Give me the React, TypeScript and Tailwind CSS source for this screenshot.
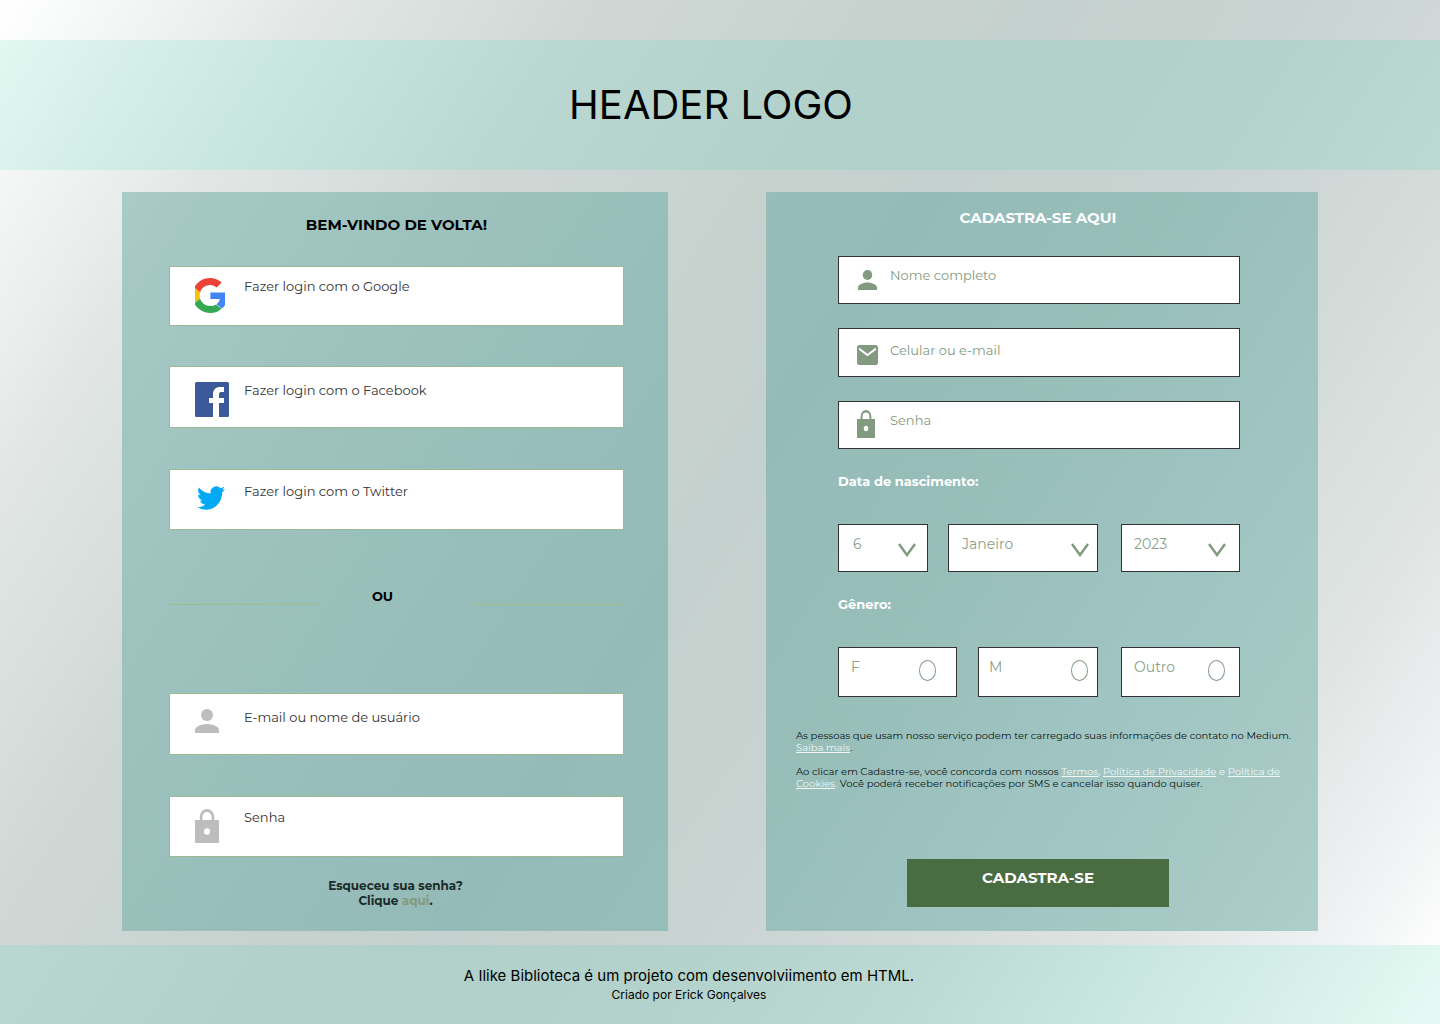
import React from "react";

const page = "bg-[linear-gradient(123deg,#ffffff_0%,#f6f8f8_5%,#e2e7e6_15%,#d0d8d6_28%,#c7d2cf_42%,#c5d1ce_50%,#c9d3d1_62%,#d4dcda_74%,#e0e5e4_84%,#f1f3f4_93%,#ffffff_98%)]";
const band = "bg-fixed bg-[linear-gradient(123deg,#e4f9f3_0%,#daf3ec_5%,#c9e6df_15%,#bad8d1_28%,#b2d1ca_42%,#b0d0c9_50%,#b3d2cb_62%,#bcdad3_74%,#c9e6df_84%,#d8f1ea_93%,#e4f9f3_99%)]";
const panel = "bg-fixed bg-[linear-gradient(123deg,#b9dad6_0%,#abcec8_10%,#a5c8c4_15%,#9dc2be_28%,#96bdb9_42%,#94bbb7_50%,#98beba_62%,#9fc4c1_74%,#a6c9c5_84%,#afd0cc_93%,#b2d3cf_98%)]";

function Person({ className }: { className: string }) {
  return (
    <svg className={className} viewBox="4 4 16 16" preserveAspectRatio="none" fill="currentColor" aria-hidden="true">
      <circle cx="12" cy="8" r="4" />
      <path d="M12 14c-2.67 0-8 1.34-8 4v2h16v-2c0-2.66-5.33-4-8-4z" />
    </svg>
  );
}

function Lock({ className }: { className: string }) {
  return (
    <svg className={className} viewBox="0 0 24 34" preserveAspectRatio="none" fill="currentColor" aria-hidden="true">
      <path fillRule="evenodd" d="M0 11h4.800V8a7.200 8 0 0 1 14.400 0v3H24v23H0zM7.400 11h9.200V8a4.600 5 0 0 0-9.200 0zM12 19.200a3 3.300 0 1 0 0 6.600a3 3.300 0 1 0 0-6.600z" />
    </svg>
  );
}

function Mail({ className }: { className: string }) {
  return (
    <svg className={className} viewBox="2 4 20 16" preserveAspectRatio="none" fill="currentColor" aria-hidden="true">
      <path d="M20 4H4c-1.100 0-2 .9-2 2v12c0 1.100.9 2 2 2h16c1.100 0 2-.9 2-2V6c0-1.100-.9-2-2-2zm0 4l-8 5-8-5V6l8 5 8-5v2z" />
    </svg>
  );
}

function Google() {
  return (
    <svg className="h-[35px] w-[30px]" viewBox="3.5 0 41 48" preserveAspectRatio="none" aria-hidden="true">
      <path fill="#EA4335" d="M24 9.500c3.540 0 6.710 1.220 9.210 3.600l6.850-6.850C35.900 2.380 30.470 0 24 0 14.620 0 6.510 5.380 2.560 13.220l7.980 6.190C12.430 13.720 17.740 9.500 24 9.500z" />
      <path fill="#4285F4" d="M48 20H24.500v8.800h12.940c-.58 2.960-2.260 5.480-4.780 7.180l7.730 6C44.900 37.800 48 31.500 48 24z" />
      <path fill="#FBBC05" d="M10.530 28.590c-.48-1.450-.76-2.990-.76-4.590s.27-3.140.76-4.590l-7.980-6.190C.92 16.460 0 20.120 0 24c0 3.880.92 7.540 2.560 10.780l7.970-6.190z" />
      <path fill="#34A853" d="M24 48c6.480 0 11.930-2.130 15.890-5.810l-7.730-6c-2.150 1.450-4.920 2.300-8.160 2.300-6.260 0-11.570-4.220-13.470-9.910l-7.980 6.190C6.510 42.620 14.620 48 24 48z" />
    </svg>
  );
}

function Facebook() {
  return (
    <svg className="h-[35px] w-[34px]" viewBox="0 0 34 35" aria-hidden="true">
      <rect width="34" height="35" rx="1.500" fill="#3b5998" />
      <path fill="#fff" d="M18 35V21h-4v-5h4v-3.500C18 7.500 20.800 5 25.200 5H29v5h-2.600C24.300 10 24 11 24 12.700V16h5v5h-5v14z" />
    </svg>
  );
}

function Twitter() {
  return (
    <svg className="ml-0.5 mt-[3px] h-6 w-7" viewBox="0 2 24 20" preserveAspectRatio="none" fill="#03a9f4" aria-hidden="true">
      <path d="M23.953 4.570a10 10 0 01-2.825.775 4.958 4.958 0 002.163-2.723c-.951.555-2.005.959-3.127 1.184a4.920 4.920 0 00-8.384 4.482C7.690 8.095 4.067 6.130 1.640 3.162a4.822 4.822 0 00-.666 2.475c0 1.710.87 3.213 2.188 4.096a4.904 4.904 0 01-2.228-.616v.060a4.923 4.923 0 003.946 4.827 4.996 4.996 0 01-2.212.085 4.936 4.936 0 004.604 3.417 9.867 9.867 0 01-6.102 2.105c-.39 0-.779-.023-1.170-.067a13.995 13.995 0 007.557 2.209c9.053 0 13.998-7.496 13.998-13.985 0-.21 0-.42-.015-.63A9.935 9.935 0 0024 4.590z" />
    </svg>
  );
}

function LoginButton({ icon, label, className }: { icon: React.ReactNode; label: string; className: string }) {
  return (
    <button type="button" className={`flex w-full items-start border border-[#9db895] bg-white pl-[25px] text-left text-[13px] leading-4 text-[#333] ${className}`}>
      <span className="flex w-[49px] shrink-0">{icon}</span>
      <span>{label}</span>
    </button>
  );
}

function Field({ icon, label, type, className }: { icon: React.ReactNode; label: string; type: string; className: string }) {
  return (
    <label className={`flex w-full items-start border bg-white ${className}`}>
      {icon}
      <input type={type} aria-label={label} placeholder={label} className="h-4 min-w-0 flex-1 bg-transparent text-[13px] leading-4 outline-none placeholder:text-current placeholder:opacity-100" />
    </label>
  );
}

function DateSelect({ label, value, className, inset, arrow }: { label: string; value: string; className: string; inset: string; arrow: string }) {
  return (
    <div className={`relative h-12 border border-[#333] bg-white ${className}`}>
      <select aria-label={label} className={`h-full w-full appearance-none bg-transparent pb-2 text-sm leading-5 text-[#8ba189] outline-none ${inset}`}>
        <option>{value}</option>
      </select>
      <svg className={`pointer-events-none absolute top-[18px] h-[14px] w-[18px] ${arrow}`} viewBox="0 0 18 14" fill="none" stroke="currentColor" strokeWidth="2.500" aria-hidden="true">
        <path d="M1 1l8 11 8-11" />
      </svg>
    </div>
  );
}

function Gender({ label, className }: { label: string; className: string }) {
  return (
    <label className={`flex h-[50px] items-start justify-between border border-[#333] bg-white pt-[9px] text-sm leading-5 text-[#8ba189] ${className}`}>
      {label}
      <input type="radio" name="genero" className="mt-[3px] h-[21px] w-[17px] appearance-none rounded-[50%] border border-[#829a80] checked:bg-[#829a80]" />
    </label>
  );
}

const link = "text-[#f0f7f5] underline";

export default function App() {
  return (
    <div className={`flex min-h-screen flex-col pt-10 font-['Montserrat','Open_Sans',sans-serif] ${page}`}>
      <header className={`flex h-[130px] items-center justify-center pr-[18px] ${band}`}>
        <h1 className="font-['Inter',sans-serif] text-[40px] leading-[50px]">HEADER LOGO</h1>
      </header>

      <main className="grid flex-1 grid-cols-[546fr_552fr] gap-x-[98px] px-[122px] pb-3.5 pt-[22px]">
        <section className={`flex flex-col pl-[47px] pr-11 pt-6 ${panel}`}>
          <h2 className="text-center text-[15px] font-bold leading-[18px]">BEM-VINDO DE VOLTA!</h2>
          <LoginButton className="mt-8 h-[60px] pt-[11px]" icon={<Google />} label="Fazer login com o Google" />
          <LoginButton className="mt-10 h-[62px] pt-[15px]" icon={<Facebook />} label="Fazer login com o Facebook" />
          <LoginButton className="mt-[41px] h-[61px] pt-[13px]" icon={<Twitter />} label="Fazer login com o Twitter" />
          <div className="mt-[58px] grid grid-cols-[150px_1fr_150px] items-end">
            <hr className="border-[#9fbd8c]" />
            <span className="pb-px pr-7 text-center text-[13px] font-bold leading-4">OU</span>
            <hr className="border-[#9fbd8c]" />
          </div>
          <form className="mt-[88px] flex flex-col text-[#333]">
            <Field type="text" label="E-mail ou nome de usuário" className="h-[62px] border-[#9db895] pl-[25px] pt-[15px]" icon={<Person className="mr-[25px] size-6 text-[#bdbdbd]" />} />
            <Field type="password" label="Senha" className="mt-[41px] h-[61px] border-[#9db895] pl-[25px] pt-3" icon={<Lock className="mr-[25px] h-[34px] w-6 text-[#bdbdbd]" />} />
          </form>
          <p className="mt-[21px] pr-0.5 text-center text-xs font-bold leading-[15px] text-[#1c2b2a]">
            Esqueceu sua senha?<br />Clique <a href="#senha" className="text-[#829a80]">aqui</a>.
          </p>
        </section>

        <section className={`flex flex-col text-[#829a80] ${panel}`}>
          <h2 className="pr-2 pt-[17px] text-center text-[15px] font-bold leading-[18px] text-white">CADASTRA-SE AQUI</h2>
          <form className="mt-[29px] flex flex-1 flex-col">
            <div className="flex flex-col pl-[72px] pr-[78px]">
              <Field type="text" label="Nome completo" className="h-12 border-[#333] pl-[19px] pt-2.5" icon={<Person className="mr-[13px] mt-[3px] h-5 w-[19px]" />} />
              <Field type="text" label="Celular ou e-mail" className="mt-6 h-[49px] border-[#333] pl-[18px] pt-[13px]" icon={<Mail className="mr-3 mt-[3px] h-5 w-[21px]" />} />
              <Field type="password" label="Senha" className="mt-6 h-12 border-[#333] pl-[18px] pt-2.5" icon={<Lock className="-mt-0.5 mr-[15px] h-7 w-[18px]" />} />
              <h3 className="mt-6 text-[13px] font-bold leading-4 text-white">Data de nascimento:</h3>
              <div className="mt-[35px] flex">
                <DateSelect label="Dia" value="6" className="w-[90px]" inset="pl-3.5" arrow="right-[11px]" />
                <DateSelect label="Mês" value="Janeiro" className="ml-5 flex-1" inset="pl-[13px]" arrow="right-2" />
                <DateSelect label="Ano" value="2023" className="ml-[23px] w-[119px]" inset="pl-3" arrow="right-[13px]" />
              </div>
              <h3 className="mt-6 text-[13px] font-bold leading-4 text-white">Gênero:</h3>
              <div className="mt-[35px] flex">
                <Gender label="F" className="w-[119px] pl-3 pr-5" />
                <Gender label="M" className="ml-[21px] flex-1 pl-2.5 pr-[9px]" />
                <Gender label="Outro" className="ml-[23px] w-[119px] pl-3 pr-3.5" />
              </div>
            </div>
            <div className="mt-[33px] pl-[30px] pr-5 text-[10px] leading-3 text-[#0c1514]">
              <p>As pessoas que usam nosso serviço podem ter carregado suas informações de contato no Medium. <br /><a href="#saiba" className={link}>Saiba mais</a>.</p>
              <p className="mt-3">Ao clicar em Cadastre-se, você concorda com nossos <a href="#termos" className={link}>Termos</a><span className="text-[#f0f7f5]">,</span> <a href="#privacidade" className={link}>Política de Privacidade</a><span className="text-[#f0f7f5]"> e </span><a href="#cookies" className={link}>Política de <br />Cookies</a><span className="text-[#f0f7f5]">.</span> Você poderá receber notificações por SMS e cancelar isso quando quiser.</p>
            </div>
            <div className="mt-auto flex justify-center pb-6 pr-2">
              <button type="submit" className="flex h-12 w-[262px] justify-center bg-[#4a6c42] pt-2.5 text-[15px] font-bold leading-[18px] text-white">CADASTRA-SE</button>
            </div>
          </form>
        </section>
      </main>

      <footer className={`h-[79px] pr-[62px] pt-[21px] text-center font-['Inter',sans-serif] ${band}`}>
        <p className="text-[15px] leading-5">A Ilike Biblioteca é um projeto com desenvolviimento em HTML.</p>
        <p className="text-xs leading-[18px]">Criado por Erick Gonçalves</p>
      </footer>
    </div>
  );
}
